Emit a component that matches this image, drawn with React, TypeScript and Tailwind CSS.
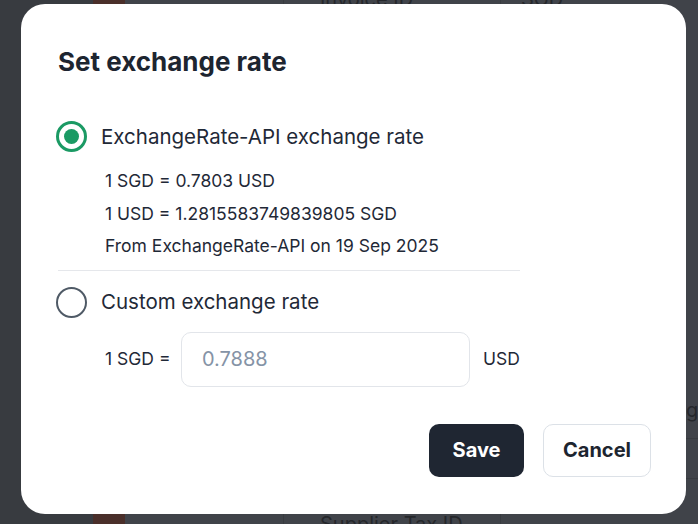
import React, { useState } from 'react';

function Radio({ checked }: { checked: boolean }) {
  if (checked) {
    return (
      <span className="flex h-[31px] w-[31px] shrink-0 items-center justify-center rounded-full border-[3px] border-[#1b9a64] bg-white">
        <span className="h-[15px] w-[15px] rounded-full bg-[#1b9a64]" />
      </span>
    );
  }
  return <span className="h-[31px] w-[31px] shrink-0 rounded-full border-2 border-[#4f5a66] bg-white" />;
}

// dimmed page behind the dialog
function Backdrop() {
  const faint = 'text-[20px] leading-[24px] text-[#25272b] whitespace-nowrap';
  return (
    <div className="flex h-full w-full bg-[#404349]">
      <div className="h-full w-[93px] bg-[#383b40]" />
      <div className="flex h-full w-[32px] flex-col justify-between">
        <div className="h-[8px] bg-[#4a2f2a]" />
        <div className="h-[12px] bg-[#4a2f2a]" />
      </div>
      <div className="h-full w-[158px]" />
      <div className="flex h-full w-[217px] flex-col justify-between border-l border-[#383b40] pl-[36px]">
        <div className={`-mt-[13px] ${faint}`}>Invoice ID</div>
        <div className={`-mb-[12px] ${faint}`}>Supplier Tax ID</div>
      </div>
      <div className="flex h-full flex-1 flex-col border-l border-[#383b40] pl-[20px]">
        <div className={`-mt-[13px] ${faint}`}>SGD</div>
        <div className="ml-auto mt-[387px] flex w-[12px] flex-col">
          <div className={`h-[40px] ${faint}`}>g</div>
          <div className="h-[41px] border-y border-[#383b40]" />
        </div>
      </div>
    </div>
  );
}

export default function App() {
  const [mode, setMode] = useState<'api' | 'custom'>('api');
  const [rate, setRate] = useState('');

  return (
    <div
      className="relative h-[524px] w-full overflow-hidden text-[#1f2937]"
      style={{ fontFamily: 'Inter, "Noto Sans", sans-serif' }}
    >
      <Backdrop />

      <div className="absolute left-[21px] top-[4px] flex h-[510px] w-[665px] flex-col rounded-[24px] bg-white pl-[37px] pr-[35px] pt-[41px]">
        <h2 className="text-[26px] font-bold leading-[34px] text-[#1d2530]">Set exchange rate</h2>

        <div className="mt-[42px] w-[462px]">
          <label className="-ml-[2px] flex cursor-pointer items-center gap-[14px]" onClick={() => setMode('api')}>
            <Radio checked={mode === 'api'} />
            <span className="text-[20.5px] leading-[30px]">ExchangeRate-API exchange rate</span>
          </label>
          <div className="ml-[47px] mt-[13px] text-[17.5px] leading-[32.5px]">
            <p>1 SGD = 0.7803 USD</p>
            <p>1 USD = 1.2815583749839805 SGD</p>
            <p>From ExchangeRate-API on 19 Sep 2025</p>
          </div>

          <div className="mt-[7px] border-t border-[#e5e7eb]" />

          <label className="-ml-[2px] mt-[16px] flex cursor-pointer items-center gap-[14px]" onClick={() => setMode('custom')}>
            <Radio checked={mode === 'custom'} />
            <span className="text-[20.5px] leading-[30px]">Custom exchange rate</span>
          </label>

          <div className="ml-[47px] mt-[14px] flex items-center gap-[13px] text-[17.5px]">
            <span className="w-[63px] whitespace-nowrap">1 SGD =</span>
            <input
              type="text"
              value={rate}
              onChange={(e) => setRate(e.target.value)}
              placeholder="0.7888"
              className="h-[55px] w-[289px] rounded-[10px] border border-[#e2e5ea] px-[20px] text-[20px] placeholder:text-[#8593a6] focus:outline-none"
            />
            <span>USD</span>
          </div>
        </div>

        <div className="mt-[37px] flex justify-end gap-[19px]">
          <button className="h-[53px] w-[95px] rounded-[10px] bg-[#1f2632] text-[20px] font-bold text-white">
            Save
          </button>
          <button className="h-[53px] w-[108px] rounded-[10px] border border-[#dce1e7] bg-white text-[20px] font-bold text-[#1d2530]">
            Cancel
          </button>
        </div>
      </div>
    </div>
  );
}
